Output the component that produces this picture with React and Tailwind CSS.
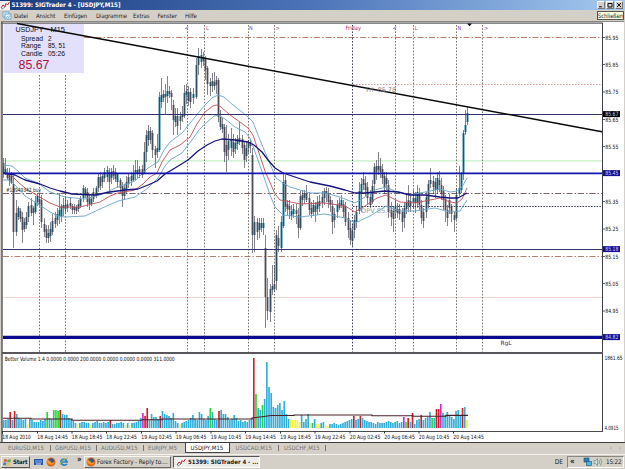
import React from "react";

// x, high, low, body top, body bottom (u = rising candle)
const candles = `3 158 178 163 173 d;5 158 175 169 174 u;7 168 180 174 178 d;9 168 186 173 181 d;11 172 184 176 183 d;13 176 248 184 232 d;16 200 236 213 232 u;18 206 220 208 217 u;20 208 222 211 219 d;22 212 243 217 230 d;24 218 232 222 229 u;26 212 229 217 225 u;28 202 222 206 217 u;31 198 216 205 213 d;33 206 225 208 213 d;35 196 214 202 212 u;37 193 206 196 202 u;39 194 206 199 204 d;41 195 228 200 222 d;44 218 237 224 232 d;46 225 243 229 238 d;48 225 243 233 238 u;50 222 242 229 236 u;52 214 235 221 232 u;55 212 228 218 224 d;57 208 226 214 220 u;59 193 224 210 216 u;61 204 222 206 217 u;63 198 216 205 208 d;65 196 213 205 209 u;67 200 212 204 208 d;70 197 209 203 206 u;72 204 214 206 210 d;74 204 214 207 210 u;76 205 214 207 211 d;78 200 212 204 209 u;80 196 208 199 206 u;83 185 202 188 198 u;85 187 198 189 194 d;87 188 207 192 202 d;89 195 210 198 204 d;91 195 206 199 204 u;93 188 202 192 199 d;96 186 198 188 196 u;98 174 192 177 188 u;100 172 190 177 186 d;102 173 188 176 182 u;104 168 182 172 178 u;107 166 182 170 177 u;109 168 192 172 182 d;111 168 184 172 178 u;113 165 180 171 176 d;115 168 182 172 179 d;117 173 188 174 182 u;120 178 192 180 188 d;122 182 207 186 196 d;124 184 200 188 196 u;126 176 194 182 190 u;128 174 188 177 184 u;131 172 186 176 181 d;133 165 182 173 180 u;135 160 180 170 174 d;137 160 178 170 174 u;139 166 178 169 173 d;142 165 178 169 175 d;144 142 174 152 173 u;146 130 162 135 152 u;148 125 146 131 140 u;150 127 144 131 140 d;152 130 158 133 150 d;155 146 168 149 155 d;157 134 158 148 152 u;159 92 152 97 150 u;161 78 108 95 102 u;163 90 102 94 98 d;165 84 115 94 97 u;167 76 103 91 96 u;169 86 98 91 94 d;171 90 110 93 97 d;173 100 135 105 120 d;175 108 127 116 122 u;177 108 135 116 126 d;180 112 130 116 121 u;182 106 122 114 117 u;184 85 118 93 116 u;186 84 104 91 95 u;188 86 106 92 101 u;190 88 108 92 102 d;193 88 104 94 98 u;196 58 99 65 97 u;198 48 75 56 65 u;201 49 68 55 62 u;203 52 66 57 61 d;205 56 80 58 70 d;207 66 95 68 84 d;210 78 96 82 86 u;212 73 92 81 86 d;214 72 90 82 86 u;216 76 94 80 85 d;218 78 122 80 117 d;220 110 130 117 127 d;222 118 133 124 129 u;224 124 162 127 152 d;226 125 172 145 156 d;228 134 160 141 150 u;231 128 156 139 148 u;233 134 158 142 152 d;235 138 154 143 149 u;237 135 150 139 144 u;239 122 145 138 142 d;242 135 154 139 148 d;244 142 168 145 160 d;246 142 162 148 156 u;248 140 153 142 148 u;250 140 153 142 146 d;252 148 253 155 235 d;254 216 252 222 235 u;257 218 240 222 232 d;259 218 238 223 230 u;261 218 232 223 228 d;263 218 235 223 228 u;265 235 328 248 297 d;267 278 320 297 311 d;270 284 322 289 312 u;272 265 295 286 290 u;274 265 292 284 289 d;276 230 290 235 281 u;278 226 252 238 246 d;281 216 252 222 248 u;283 172 228 182 226 u;285 175 212 180 207 d;287 200 215 204 209 d;289 200 219 206 210 d;291 205 220 211 216 u;293 204 218 209 214 u;296 204 224 210 214 d;298 208 238 215 228 d;300 191 230 196 228 u;302 190 206 195 200 d;304 190 204 194 198 u;306 185 202 193 200 d;309 192 215 198 210 d;311 202 218 208 214 d;313 200 216 205 212 u;315 202 222 206 212 d;317 196 215 202 209 u;319 195 212 201 206 d;322 191 208 197 203 u;324 188 205 191 198 u;326 187 202 191 194 d;328 188 208 194 202 d;330 196 212 200 205 d;332 200 234 206 222 d;334 208 228 214 220 u;337 200 218 205 212 u;339 198 210 203 208 d;341 195 208 200 205 u;343 200 218 204 212 d;345 202 226 206 222 d;348 212 238 218 230 d;350 220 245 228 240 d;352 224 246 231 241 u;354 215 238 220 230 u;356 206 228 212 222 u;359 182 214 191 211 u;361 178 212 184 192 u;363 172 190 179 185 d;365 176 196 183 190 d;367 182 204 187 198 d;370 190 208 197 205 u;372 180 204 186 202 u;374 163 192 167 184 u;376 160 180 166 172 d;378 152 175 166 170 u;380 158 178 166 172 d;382 164 184 169 178 d;384 172 194 176 188 d;386 172 190 178 184 u;388 180 218 185 212 d;391 202 226 210 217 d;393 206 232 211 219 d;395 200 218 206 212 u;397 203 218 209 213 d;399 204 220 209 214 d;402 208 232 212 222 d;404 202 228 208 218 u;406 194 214 202 209 u;408 185 212 200 206 d;410 196 212 201 206 u;413 190 208 198 203 u;415 192 213 198 203 d;417 185 208 192 203 u;419 188 210 195 205 d;421 200 224 205 218 d;423 208 228 212 221 d;426 192 218 197 212 u;428 180 208 184 204 u;430 168 188 180 184 u;433 176 194 181 187 d;435 178 198 182 190 d;437 172 194 178 190 u;439 171 192 180 185 d;441 178 200 185 193 d;443 186 210 191 200 d;445 195 222 199 210 d;447 205 226 210 218 d;449 194 214 200 208 d;451 204 222 207 214 d;454 212 232 215 220 d;456 188 220 195 218 u;459 166 196 188 194 u;461 172 193 174 190 u;463 130 180 133 173 u;465 110 135 125 132 u;467 107 125 113 122 u`
  .split(";")
  .map((row) => row.split(" "));

// one entry per bar, letter = colour other than the usual blue
const volumes =
  "8 8 9 16r 8 17r 14 10 9 8 9 4y 9 8 6 6 6 8 7 9 16g 10 9 18g 18g 17g 18r 14 13 13 10 9 7 5 4y 5 6 6 5 5 3y 5 6 7 5 5 6 5 6 8r 4 4 5 5 6 5 3y 5 3y 5 5 6 7 10 15m 12r 20r 8 14 11 11 9 12r 17 14 13 12 10 15 7 5 4y 5 6 7 8 10 13 9 8 16 14 9 8 12 20g 16 9 8 17r 18 14 14 11 8 9 13 10 7 8 6 7 6 8 10 70r 34g 20 18 23g 29 66 41 35 21 20 23 25 18 27 14 9 8y 8y 8y 8y 6y 13 6 9 14 5y 5 9 4y 4y 5 6 3y 2y 4 4 5 4 3 4 5 6 7 8 9 12r 8 9 12r 10 8 7 6 6 5 4 6 5 5 5 6 7 6 5 6 7 5 6 11m 6g 10r 6 15r 4 8 9 13r 8 10 11 16 10g 10 19r 19r 24m 15 13 16 12 11 9 17 18 13 20r 21 8y".split(" ");
const volumeColors = { r: "#d31e28", g: "#25d832", y: "#f7f43c", m: "#d32bd2" };

const upperBand = "3,165 12,166 18,171 25,178 38,183 50,192 65,197 85,199 100,195 118,187 135,181 148,168 158,162 164,150 170,142 182,133 195,117 205,105 212,98 218,95 224,97 233,105 242,112 248,117 253,122 258,135 265,152 276,178 283,183 290,187 310,193 325,193 340,197 355,203 365,197 375,190 386,187 395,191 410,195 430,191 440,189 450,192 457,191 462,187 467,178";
const middleBand = "3,173 10,174 18,182 25,188 38,196 50,203 60,207 80,207 100,202 110,196 118,193 135,190 143,184 150,177 157,173 162,162 170,150 180,145 190,137 197,124 205,112 213,106 217,105 221,107 230,115 240,122 248,128 253,135 258,150 265,171 275,194 280,200 286,201 300,204 325,203 345,206 355,212 365,206 377,198 386,195 400,202 415,203 430,200 440,198 450,202 457,203 462,199 467,188";
const lowerBand = "3,180 9,180 15,185 25,196 38,204 50,212 58,216 65,217 85,216 100,209 118,201 135,197 148,188 158,178 165,166 170,160 182,153 192,140 199,130 206,123 214,116 219,115 225,119 235,127 245,132 250,138 258,160 265,180 270,195 275,207 283,215 300,217 325,214 345,218 355,223 370,216 386,206 400,211 415,211 435,208 450,212 460,211 467,200";
const slowAverage = "3,173 15,175 25,180 40,184 50,188 60,191 72,194 95,195 110,192 125,190 138,189 148,185 157,181 165,174 175,168 188,160 198,151 207,145 215,141 222,139 235,140 248,142 254,145 262,152 268,160 275,168 283,173 295,177 310,182 330,186 345,190 355,193 365,193 385,191 398,192 410,195 425,195 440,197 450,198 458,198 467,193";

const verticals = [39.5, 65.5, 187.5, 204.5, 248.5, 274.5, 352.5, 395.5, 413.5, 456.5, 482.5];
const sessionMarks = [
  [184.5, "<"], [206, "L"], [249, "N"], [275.5, ">"], [392.5, "<"], [414.5, "L"], [457.5, "N"], [484, ">"],
];
const prices = [
  ["85.95", 37.5], ["85.85", 64.5], ["85.75", 92], ["85.65", 119.5], ["85.55", 146.5], ["85.35", 201.5],
  ["85.25", 229], ["85.15", 256.5], ["85.05", 283.5], ["84.95", 311],
];
const priceTags = [
  ["85.67", 114, "#000"], ["85.45", 173, "#10109a"], ["85.18", 249, "#10109a"], ["84.82", 337, "#10109a"],
];
const times = [
  [2.5, "18 Aug 2010"], [37.5, "18 Aug 14:45"], [72, "18 Aug 18:45"], [106.5, "18 Aug 22:45"], [141.5, "19 Aug 02:45"],
  [176, "19 Aug 06:45"], [211, "19 Aug 10:45"], [245.5, "19 Aug 14:45"], [280.5, "19 Aug 18:45"], [315, "19 Aug 22:45"],
  [350, "20 Aug 02:45"], [384.5, "20 Aug 06:45"], [419, "20 Aug 10:45"], [453.5, "20 Aug 14:45"],
];

const Label = ({ x, y, w, size = 5.8, fill = "#111", children, className = "" }) => (
  <text x={x} y={y} fontSize={size} fill={fill} textLength={w} lengthAdjust="spacingAndGlyphs" className={className}>
    {children}
  </text>
);

const ChartIcon = () => (
  <svg viewBox="0 0 10 9" className="h-[9px] w-[10px] shrink-0">
    <rect width="10" height="9" fill="#f3f1f1" />
    <path d="M1 7L3 4L5 5.5L6 2.5L7.5 4L9.5 1" fill="none" stroke="#b42c38" />
    <path d="M1 8L4 7L6 5" fill="none" stroke="#555" strokeWidth=".6" />
  </svg>
);

const Firefox = () => (
  <svg viewBox="0 0 10 10" className="h-[10px] w-[10px] shrink-0">
    <circle cx="5" cy="5" r="4.5" fill="#dd6919" />
    <circle cx="5.3" cy="4" r="2.7" fill="#315896" />
    <path d="M.8 3C2 2 3 4 5 4.2C4 5.5 6 6.5 8 5C8 7 6 8 4 7.4C2 7 1 5 .8 3Z" fill="#f29a25" />
  </svg>
);

const Chart = () => (
  <svg
    viewBox="0 21 625 422"
    className="block h-[422px] w-[625px] shrink-0 bg-white font-['DejaVu_Sans_Condensed','DejaVu_Sans',sans-serif]"
  >
    {/* window frame */}
    <rect x="0" y="21" width="625" height="1" fill="#888580" />
    <rect x="1" y="22.5" width="602" height="1.2" fill="#55555a" />
    <rect x="0" y="21" width="1" height="422" fill="#d4d0c8" />
    <rect x="1.2" y="22" width="1.5" height="421" fill="#55555a" />
    <rect x="624" y="21" width="1" height="422" fill="#d4d0c8" />

    <rect x="3.5" y="24" width="80.5" height="49" fill="#e2e0fa" />

    {/* levels */}
    <g fill="none">
      <path d="M84 37.5H602M3 256.5H602" stroke="#b77f70" strokeDasharray="6 2 1.5 2" />
      <path d="M353 84.5H602" stroke="#d59b9b" strokeDasharray="1.5 1.5" />
      <path d="M3 160.8H602" stroke="#c8ecc6" strokeWidth="1.3" />
      <path d="M3 193.5H602" stroke="#806068" strokeDasharray="6 2 1.5 2" />
      <path d="M353 206.5H602" stroke="#353565" strokeDasharray="1.5 1.3" />
      <path d="M3 297.5H602" stroke="#f3d4d1" />
      {verticals.map((x) => (
        <path key={x} d={`M${x} ${x < 80 ? 75 : 25}V352`} stroke={x === 352.5 ? "#404064" : "#77756d"} strokeDasharray="1.6 1.6" />
      ))}
    </g>

    {/* candles */}
    {candles.map(([x, high, low, top, bottom, dir]) => (
      <g key={x}>
        <rect x={+x - 0.5} y={top} width="2" height={bottom - top} fill={dir === "u" ? "#287c98" : "#77707a"} />
        <rect x={x} y={high} width="1" height={low - high} fill="#30303f" opacity=".6" />
      </g>
    ))}

    <g fill="none" strokeLinejoin="round">
      <polyline points={upperBand} stroke="#66a5c8" strokeWidth=".9" />
      <polyline points={lowerBand} stroke="#66a5c8" strokeWidth=".9" />
      <polyline points={middleBand} stroke="#c05058" strokeWidth=".9" />
      <polyline points={slowAverage} stroke="#15157c" strokeWidth="1.3" />
      <path d="M3 114.5H602M3 249.5H602" stroke="#33336c" />
      <path d="M3 173.3H602" stroke="#1414b4" strokeWidth="1.7" />
      <path d="M3 337.3H602" stroke="#0a0a8e" strokeWidth="3.2" />
      <path d="M17 23.5L205 58.2L602 131.7" stroke="#090909" strokeWidth="1.5" />
    </g>

    {sessionMarks.map(([x, mark]) => (
      <Label key={x} x={x} y={30} size={5.5} fill="#8545a5">{mark}</Label>
    ))}
    <Label x={345.5} y={30} w={15.5} size={6} fill="#b22355">Friday</Label>
    <path d="M467 23.5H472L469.5 26.2Z" fill="#080820" />
    <Label x={366} y={91.7} w={30} size={6.5} fill="#858085">Fri&#160; 85.78</Label>
    <Label x={361} y={213} w={35} size={6.5} fill="#9c9da3">DPV 85.33</Label>
    <Label x={6} y={192.2} w={35} fill="#282828">#13949342 buy</Label>
    <Label x={500.5} y={344.5} w={11} size={5.8} fill="#26266b">RgL</Label>

    {/* price info */}
    <g className="font-['Liberation_Sans',sans-serif]">
      <Label x={15.5} y={32} w={28} size={7.2}>USDJPY</Label>
      <Label x={50.5} y={32} w={14.5} size={7.2}>M15</Label>
      <Label x={21} y={40.6} w={22} size={6.4}>Spread</Label>
      <Label x={48} y={40.6} size={6.4}>2</Label>
      <Label x={21} y={48.1} w={20} size={6.4}>Range</Label>
      <Label x={48} y={48.1} w={17.5} size={6.4}>85, 51</Label>
      <Label x={21} y={55.6} w={21.5} size={6.4}>Candle</Label>
      <Label x={48} y={55.6} w={17} size={6.4}>05:26</Label>
      <Label x={18.5} y={68.8} w={31} size={12} fill="#b0103e">85.67</Label>
    </g>

    {/* price axis */}
    <path d="M602.5 23V431" stroke="#3f3f48" />
    {prices.map(([price, y]) => (
      <g key={price}>
        <path d={`M603 ${y}H605`} stroke="#333" strokeWidth=".8" />
        <Label x={605.3} y={y + 2} w={13}>{price}</Label>
      </g>
    ))}
    {priceTags.map(([price, y, color]) => (
      <g key={price}>
        <rect x="603" y={y - 2.9} width="17" height="6" fill={color} />
        <Label x={605.3} y={y + 2} w={13} fill="#d2d2e2">{price}</Label>
      </g>
    ))}

    {/* volume window */}
    <rect x="2" y="352" width="601" height="2" fill="#56565b" />
    <Label x={4.7} y={361.3} w={170}>
      Better Volume 1.4 0.0000 0.0000 200.0000 0.0000 0.0000 0.0000 311.0000
    </Label>
    {volumes.map((v, i) => (
      <rect
        key={i}
        x={2.9 + i * 2.1745}
        y={428 - parseInt(v)}
        width="1.65"
        height={parseInt(v)}
        fill={volumeColors[v.slice(-1)] || "#32aedb"}
      />
    ))}
    <path
      d="M3 418.3H31V419H72V420.2H142V419.8H162V419H252V418L264 416.5L271 415.5H294V415H372V415.7H413V416.3H446V415.4H468"
      fill="none"
      stroke="#4a2028"
      strokeWidth="1.1"
    />
    <path d="M2 431.5H603" stroke="#4b4b50" />
    {times.map(([x, time]) => (
      <g key={x}>
        <path d={`M${x} 431V433.5`} stroke="#333" />
        <Label x={x - 0.2} y={439} w={x < 10 ? 28.5 : 30.5}>{time}</Label>
      </g>
    ))}
    <Label x={604.5} y={359.5} w={18}>1861.65</Label>
    <Label x={604.5} y={430} w={14}>4.0915</Label>
    <rect x="0" y="442" width="625" height="1" fill="#3e3e40" />
  </svg>
);

const WindowButton = ({ children }) => (
  <div className="flex h-[8px] w-[8px] items-center justify-center border-[0.5px] border-white border-r-[#777] border-b-[#777] bg-[#d4d0c8]">
    <svg viewBox="0 0 6 6" className="h-[6px] w-[6px]" fill="none" stroke="#111">{children}</svg>
  </div>
);

const menu = [
  ["Datei", "w-[22px]"], ["Ansicht", "w-[28px]"], ["Einfügen", "w-[32px]"], ["Diagramme", "w-[37px]"],
  ["Extras", "w-[24.5px]"], ["Fenster", "w-[27.5px]"], ["Hilfe", "w-[20px]"],
];

const App = () => {
  return (
    <div className="flex h-[469px] w-[625px] flex-col overflow-hidden bg-[#d4d0c8] font-['DejaVu_Sans_Condensed','DejaVu_Sans',sans-serif] text-[6px] leading-none text-[#222]">
      <header className="flex h-[10px] shrink-0 items-center bg-linear-to-r from-[#183c7e] via-[#4c74b8] via-50% to-[#a6caf0] pr-[2px]">
        <ChartIcon />
        <span className="ml-[1.5px] whitespace-nowrap text-[6.2px] font-bold text-white">51399: SIGTrader 4 - [USDJPY,M15]</span>
        <div className="ml-auto flex gap-[1px]">
          <WindowButton><path d="M1 4.8H4" /></WindowButton>
          <WindowButton><path d="M1 1.5H5V5H1Z" /></WindowButton>
          <WindowButton><path d="M1 1L5 5M5 1L1 5" /></WindowButton>
        </div>
      </header>

      <nav className="flex h-[11px] shrink-0 items-center">
        <svg viewBox="0 0 10 9" className="ml-[2px] h-[9px] w-[10px]" fill="#e8f4fb" stroke="#579cc3" strokeWidth=".8">
          <rect x="1" y="1" width="6" height="5" />
          <rect x="3" y="3" width="6" height="5" />
          <path d="M4 7L5.5 5.5L6.5 6.5L8 4.5" />
        </svg>
        <div className="ml-[2px] flex">
          {menu.map(([name, width]) => (
            <span key={name} className={`${width} whitespace-nowrap tracking-[-0.1px]`}>{name}</span>
          ))}
        </div>
        <div className="mr-[1px] ml-auto flex h-[9px] w-[27px] items-center justify-center border border-[#55554f] bg-[#ffffe1] whitespace-nowrap tracking-[-0.1px]">
          Schließen
        </div>
      </nav>

      <Chart />

      <div className="flex h-[10px] shrink-0 items-center text-[6px] text-[#77736d]">
        <span className="w-[50px] pl-[8px]">EURUSD,M15</span>
        <span className="w-[46px] border-l border-[#77736d] pl-[4px]">GBPUSD,M15</span>
        <span className="w-[47px] border-l border-[#77736d] pl-[4px]">AUDUSD,M15</span>
        <span className="w-[41.5px] border-l border-[#77736d] pl-[4px]">EURJPY,M5</span>
        <span className="flex h-full w-[45px] items-center border-x border-b border-[#444] bg-white pl-[5px] text-[#222]">USDJPY,M15</span>
        <span className="w-[48.5px] pl-[6px]">USDCAD,M15</span>
        <span className="w-[48px] border-x border-[#77736d] pl-[5px]">USDCHF,M15</span>
        <div className="ml-auto flex gap-[7px] pr-[4px]">
          <span>‹</span>
          <span>›</span>
        </div>
      </div>

      <footer className="mt-[1px] flex h-[15px] shrink-0 items-center border-t border-[#f4f2ee] pl-[1px] text-[6.2px] text-[#222]">
        <div className="flex h-[12px] w-[29px] items-center gap-[1px] border border-[#f8f6f2] border-r-[#555] border-b-[#555] pl-[1px] font-bold">
          <svg viewBox="0 0 9 9" className="h-[9px] w-[9px] shrink-0">
            <path d="M1.5 1L4 1.5L3.5 4L.7 3.5Z" fill="#e05a2e" />
            <path d="M4.6 1.7L8 1.3L7.4 4.2L4 4.2Z" fill="#67aa46" />
            <path d="M.6 4.3L3.4 4.7L3 7.4L0 7Z" fill="#427fc5" />
            <path d="M4 5L7.3 4.9L6.7 7.8L3.4 7.7Z" fill="#efc340" />
          </svg>
          <span className="text-[6px] tracking-[-0.2px]">Start</span>
        </div>
        <div className="ml-[4px] flex items-center gap-[3px]">
          <svg viewBox="0 0 9 8" className="h-[8px] w-[9px]">
            <rect y="1" width="9" height="6" fill="#2855a8" />
            <rect x="1" y="2" width="7" height="3" fill="#5687ce" />
            <path d="M2 6H7" stroke="#d7e4f5" />
          </svg>
          <Firefox />
          <svg viewBox="0 0 10 10" className="h-[10px] w-[10px]" fill="none">
            <path d="M8 7C6 9 2 8 2 5C2 2 7 1 8 5H3" stroke="#2683c7" strokeWidth="1.7" />
            <path d="M1 8C0 6 6 1 9 1" stroke="#b4ba44" />
          </svg>
        </div>
        <span className="ml-[8px] w-[7px] self-start pt-[1px] text-[8px] font-bold">»</span>
        <div className="flex h-[12px] w-[87px] items-center gap-[1px] border border-[#f8f6f2] border-r-[#666] border-b-[#666] pl-[1px]">
          <Firefox />
          <span className="whitespace-nowrap tracking-[-0.06px]">Forex Factory - Reply to....</span>
        </div>
        <div className="ml-[2px] flex h-[12px] w-[87px] items-center gap-[2px] border border-[#555] border-r-white border-b-white bg-[#eeece8] pl-[2px] font-bold">
          <ChartIcon />
          <span className="whitespace-nowrap text-[6px]">51399: SIGTrader 4 - ...</span>
        </div>
        <span className="ml-auto pr-[4px] text-[6.5px]">DE</span>
        <div className="mr-[1px] flex h-[12px] w-[57px] items-center border border-[#898580] border-r-white border-b-white pl-[2px]">
          <span className="w-[13px] text-[8px] font-bold">«</span>
          <svg viewBox="0 0 20 10" className="h-[10px] w-[20px] shrink-0" fill="none">
            <rect x="1" y="1" width="5" height="4" fill="#367cad" stroke="#174f7c" strokeWidth=".6" />
            <rect x="3.5" y="4.5" width="5" height="4" fill="#45bcdc" stroke="#174f7c" strokeWidth=".6" />
            <path d="M11 3.5H12.5L14.5 1.5V8.5L12.5 6.5H11Z" fill="#d6dad7" stroke="#6f7773" strokeWidth=".6" />
            <path d="M16 3Q17 5 16 7M17.5 1.5Q20 5 17.5 8.5" stroke="#4ba765" strokeWidth=".7" />
          </svg>
          <span className="pl-[3px] text-[6.3px] tracking-[-0.2px]">15:22</span>
        </div>
      </footer>
    </div>
  );
};

export default App;
